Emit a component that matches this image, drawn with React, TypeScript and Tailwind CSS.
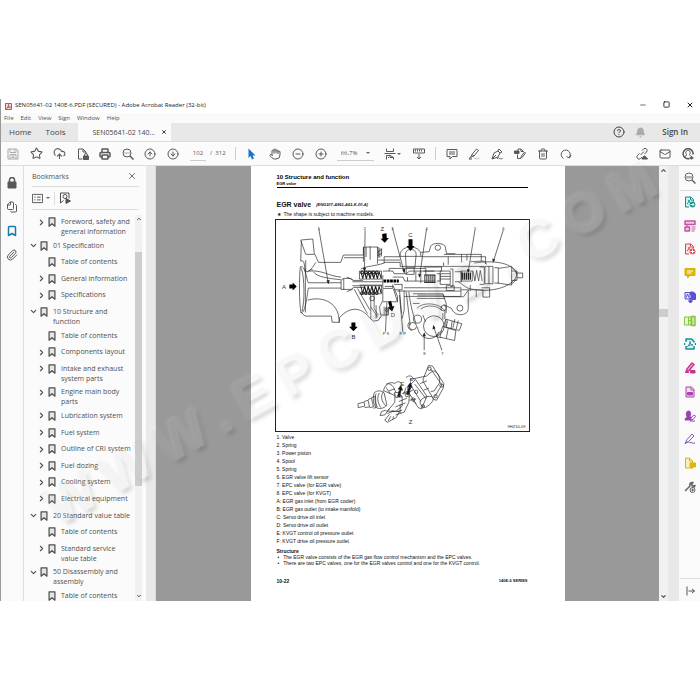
import type { ReactNode } from "react";
import {
  Bell,
  Bookmark,
  ChevronDown,
  ChevronRight,
  ChevronUp,
  CircleArrowDown,
  CircleArrowUp,
  CircleHelp,
  CircleMinus,
  CirclePlus,
  CloudUpload,
  Files,
  Hand,
  Mail,
  Minus,
  Paperclip,
  Printer,
  Square,
  Star,
  Trash2,
  X,
} from "lucide-react";

type BookmarkItem = { title: string; level: 0 | 1; state: "open" | "closed" | "leaf" };

const bookmarks: BookmarkItem[] = [
  { title: "Foreword, safety and\ngeneral information", level: 1, state: "closed" },
  { title: "01 Specification", level: 0, state: "open" },
  { title: "Table of contents", level: 1, state: "leaf" },
  { title: "General information", level: 1, state: "closed" },
  { title: "Specifications", level: 1, state: "closed" },
  { title: "10 Structure and\nfunction", level: 0, state: "open" },
  { title: "Table of contents", level: 1, state: "leaf" },
  { title: "Components layout", level: 1, state: "closed" },
  { title: "Intake and exhaust\nsystem parts", level: 1, state: "closed" },
  { title: "Engine main body\nparts", level: 1, state: "closed" },
  { title: "Lubrication system", level: 1, state: "closed" },
  { title: "Fuel system", level: 1, state: "closed" },
  { title: "Outline of CRI system", level: 1, state: "closed" },
  { title: "Fuel dozing", level: 1, state: "closed" },
  { title: "Cooling system", level: 1, state: "closed" },
  { title: "Electrical equipment", level: 1, state: "closed" },
  { title: "20 Standard value table", level: 0, state: "open" },
  { title: "Table of contents", level: 1, state: "leaf" },
  { title: "Standard service\nvalue table", level: 1, state: "closed" },
  { title: "50 Disassembly and\nassembly", level: 0, state: "open" },
  { title: "Table of contents", level: 1, state: "leaf" },
];

const parts = [
  "1. Valve",
  "2. Spring",
  "3. Power piston",
  "4. Spool",
  "5. Spring",
  "6. EGR valve lift sensor",
  "7. EPC valve (for EGR valve)",
  "8. EPC valve (for KVGT)",
  "A: EGR gas inlet (from EGR cooler)",
  "B: EGR gas outlet (to intake manifold)",
  "C: Servo drive oil inlet",
  "D: Servo drive oil outlet",
  "E: KVGT control oil pressure outlet",
  "F: KVGT drive oil pressure outlet",
];

export default function App() {
  return (
    <div className="flex h-screen flex-col bg-white py-[99px] font-['Open_Sans','Noto_Sans',sans-serif] text-[#505050]">
      <div className="relative flex min-h-0 flex-1 flex-col overflow-hidden border-l border-[#999]">
        <TitleBar />
        <MenuBar />
        <TabBar />
        <Toolbar />
        <div className="flex min-h-0 flex-1">
          <LeftRail />
          <BookmarksPanel />
          <div className="w-[10px] shrink-0 border-r border-[#ddd] bg-[#e9e9e9]" />
          <main className="flex min-w-0 flex-1 justify-center overflow-hidden bg-[#999]">
            <DocumentPage />
          </main>
          <div className="flex w-[9px] shrink-0 flex-col items-center bg-[#f1f1f1] py-px">
            <ChevronUp className="size-[7px]" strokeWidth={4} />
            <div className="mt-[135px] h-2 w-full bg-[#cdcdcd]" />
            <ChevronDown className="mt-auto size-[7px]" strokeWidth={4} />
          </div>
          <div className="w-[11px] shrink-0 bg-[#e8e8e8]" />
          <ToolsRail />
        </div>
        <Watermark />
      </div>
    </div>
  );
}

function TitleBar() {
  return (
    <header className="flex h-[14px] shrink-0 items-center pl-1 pr-[6px] text-[6px] leading-none text-[#222]">
      <svg viewBox="0 0 24 24" className="mr-[3px] size-[7px]" fill="none" stroke="#c33b36" strokeWidth="3">
        <rect x="2" y="2" width="20" height="20" fill="#f4dcda" />
        <path d="M6 18c4-3 6-8 6-13 0 5 2 9 7 10-5-1-9 0-13 3z" />
      </svg>
      <h1 className="-mt-[2px]">SEN05641-02 140E-6.PDF (SECURED) - Adobe Acrobat Reader (32-bit)</h1>
      <div className="-mt-[3px] ml-auto flex items-center gap-4">
        <button aria-label="Minimize" className="flex"><Minus className="size-2" /></button>
        <button aria-label="Maximize" className="flex"><Square className="size-[7px]" strokeWidth={3} /></button>
        <button aria-label="Close" className="flex"><X className="size-2" strokeWidth={3} /></button>
      </div>
    </header>
  );
}

function MenuBar() {
  return (
    <nav className="flex h-[10px] shrink-0 items-center gap-[7px] bg-[#fafafa] pl-[3px] text-[6px] leading-none">
      {["File", "Edit", "View", "Sign", "Window", "Help"].map((m) => (
        <button key={m}>{m}</button>
      ))}
    </nav>
  );
}

function TabBar() {
  return (
    <div className="flex h-[19px] shrink-0 items-center border-b border-[#ddd] bg-[#e8e8e8] text-[8px] leading-none text-[#444]">
      <button className="ml-2">Home</button>
      <button className="ml-[14px]">Tools</button>
      <div className="ml-[13px] flex h-full w-[93px] items-center justify-between bg-[#fbfbfb] pl-[14px] pr-1 text-[7px]">
        <span className="whitespace-nowrap">SEN05641-02 140...</span>
        <button aria-label="Close tab"><X className="size-[6px]" strokeWidth={4} /></button>
      </div>
      <button className="ml-auto" aria-label="Help"><CircleHelp className="size-3" /></button>
      <button className="ml-[10px]" aria-label="Notifications"><Bell className="size-[11px] fill-[#aaa] text-[#aaa]" /></button>
      <button className="ml-4 mr-[12px] font-semibold">Sign In</button>
    </div>
  );
}

function Icon({ children, className = "size-3" }: { children: ReactNode; className?: string }) {
  return (
    <svg viewBox="0 0 24 24" className={className} fill="none" stroke="currentColor" strokeWidth="2" strokeLinejoin="round">
      {children}
    </svg>
  );
}

function ToolButton({ label, children }: { label: string; children: ReactNode }) {
  return (
    <button aria-label={label} className="flex shrink-0 items-center">
      {children}
    </button>
  );
}

function Caret() {
  return <span className="border-x-2 border-t-2 border-x-transparent border-t-[#666]" />;
}

function Toolbar() {
  return (
    <div className="flex h-6 shrink-0 items-center border-b border-[#ddd] bg-[#fbfbfb] px-[6px] text-[#585858]">
      <div className="flex w-[172px] justify-between">
        <ToolButton label="Save">
          <Icon className="size-3 text-[#aaa]">
            <path d="M2 2h17l3 3v17H2zM6 2v7h12V2M14 3v4M6 22v-9h12v9M9 16h6M9 19h6" />
          </Icon>
        </ToolButton>
        <ToolButton label="Star"><Star className="size-[13px]" /></ToolButton>
        <ToolButton label="Upload"><CloudUpload className="size-[13px]" /></ToolButton>
        <ToolButton label="Protect">
          <Icon>
            <path d="M11 22H3V2h9l6 6v3M12 2v6h6" />
            <path d="M13 16h10v7H13z" fill="currentColor" />
            <path d="M15 16v-2a3 3 0 0 1 6 0v2" />
          </Icon>
        </ToolButton>
        <ToolButton label="Print"><Printer className="size-3" strokeWidth={3} /></ToolButton>
        <ToolButton label="Search">
          <Icon>
            <circle cx="10" cy="10" r="8" />
            <path d="m16 16 7 7" strokeWidth="3" />
            <path d="M5 10h2m2 0h2m2 0h2" />
          </Icon>
        </ToolButton>
        <ToolButton label="Previous page"><CircleArrowUp className="size-3" /></ToolButton>
        <ToolButton label="Next page"><CircleArrowDown className="size-3" /></ToolButton>
      </div>
      <input aria-label="Page number" defaultValue="102" className="ml-[11px] w-4 border-b border-[#ccc] text-center text-[6px] leading-[14px]" />
      <span className="ml-1 whitespace-pre text-[6px]">/  312</span>
      <div className="ml-[9px] h-[13px] w-px bg-[#ccc]" />
      <div className="ml-[10px] flex w-[81px] justify-between">
        <ToolButton label="Select">
          <Icon className="size-3 text-[#1473c8]">
            <path d="M5 1v19l4-4 3 7 4-2-3-6h6z" fill="currentColor" stroke="none" />
          </Icon>
        </ToolButton>
        <ToolButton label="Pan"><Hand className="size-3" /></ToolButton>
        <ToolButton label="Zoom out"><CircleMinus className="size-3" /></ToolButton>
        <ToolButton label="Zoom in"><CirclePlus className="size-3" /></ToolButton>
      </div>
      <div className="ml-[10px] flex w-[37px] items-center justify-between border-b border-[#ccc] px-1">
        <select aria-label="Zoom level" className="w-6 appearance-none text-[6px] leading-[14px]">
          <option>66,7%</option>
        </select>
        <Caret />
      </div>
      <button aria-label="Fit page" className="ml-[10px] flex items-center gap-px">
        <Icon>
          <path d="M5 1v6h14V1M1 11h22M5 23v-8h8l6 4v4M12 15v4h7M8 19h2" />
        </Icon>
        <Caret />
      </button>
      <button aria-label="Read mode" className="ml-3">
        <Icon>
          <path d="M1 2h22v8H1zM5 3v4m4-4v4m4-4v4m4-4v4M12 12v10M8 18l4 4 4-4" />
        </Icon>
      </button>
      <div className="ml-[10px] h-[13px] w-px bg-[#ccc]" />
      <div className="ml-[10px] flex w-[126px] justify-between">
        <ToolButton label="Comment">
          <Icon><path d="M2 3h20v14h-9l-5 5v-5H2zM6 8h12M6 12h12" /></Icon>
        </ToolButton>
        <ToolButton label="Highlight">
          <Icon>
            <path d="M8 13 17 2l4 3-9 11zM8 13l-3 6 7-3M5 18l-3 4h6" />
            <path d="M12 21h11" stroke="#ccc" strokeWidth="3" />
          </Icon>
        </ToolButton>
        <ToolButton label="Sign">
          <Icon><path d="m2 22 4-12 8-4 4 4-4 8zM14 6l2-4 6 6-4 2M2 22l8-8M12 22c4-6 4 2 11-1" /></Icon>
        </ToolButton>
        <ToolButton label="Stamp">
          <Icon>
            <path d="M8 6V2h6l5 5M7 13v8h6M14 2v5h5M13 21l2-5 6-8 2 2-6 8z" />
            <path d="M1 6h9v5H1z" fill="currentColor" />
          </Icon>
        </ToolButton>
        <ToolButton label="Delete">
          <Trash2 className="size-3" />
        </ToolButton>
        <ToolButton label="Rotate">
          <Icon><path d="M7 21A9 9 0 1 1 19 18M13 17l6 3 3-6" /></Icon>
        </ToolButton>
      </div>
      <div className="ml-auto flex w-[58px] justify-between">
        <ToolButton label="Share link">
          <Icon>
            <path d="m9 14 7-7M7 11l-4 4a4 4 0 0 0 6 6l3-3M12 5l3-3a4 4 0 0 1 6 6l-4 4" />
            <path d="M12 22c0-4 3-3 4-6 3-1 3 2 4 3 3 0 3 3 3 3z" fill="currentColor" />
          </Icon>
        </ToolButton>
        <ToolButton label="Email"><Mail className="size-3" /></ToolButton>
        <ToolButton label="Account">
          <Icon>
            <path d="M15 21A10 10 0 1 1 22 13" strokeWidth="3" />
            <path d="M5 19c1-5 5-3 4-6-3-4-1-8 3-8s6 4 3 8c0 2 2 2 3 2" />
            <path d="M19 16v7M15 20h8" strokeWidth="3" />
          </Icon>
        </ToolButton>
      </div>
    </div>
  );
}

function LeftRail() {
  return (
    <aside className="flex w-[23px] shrink-0 flex-col items-center gap-3 border-r border-[#ddd] bg-[#fafafa] pt-[11px] text-[#585858]">
      <button aria-label="Security" className="flex">
        <Icon>
          <path d="M4 10h16v12H4z" fill="currentColor" />
          <path d="M7 10V6a5 5 0 0 1 10 0v4" strokeWidth="3" />
        </Icon>
      </button>
      <button aria-label="Pages" className="flex"><Files className="size-3 -scale-x-100" /></button>
      <button aria-label="Bookmarks" className="flex"><Bookmark className="size-3 text-[#1a78ad]" strokeWidth={3} /></button>
      <button aria-label="Attachments" className="flex"><Paperclip className="size-3" /></button>
    </aside>
  );
}

function BookmarksPanel() {
  return (
    <section className="flex w-[122px] shrink-0 flex-col bg-[#fbfbfb]">
      <div className="ml-2 mr-[7px] flex h-[21px] shrink-0 items-center justify-between border-b border-[#ddd] pr-[2px]">
        <h2 className="text-[7px] leading-none">Bookmarks</h2>
        <button aria-label="Close panel"><X className="size-[10px]" /></button>
      </div>
      <div className="ml-2 mr-[7px] flex h-[23px] shrink-0 items-center border-b border-[#ddd]">
        <button aria-label="Options" className="flex items-center gap-[3px]">
          <Icon className="size-[11px]"><path d="M1 3h22v18H1zM5 9h3m3 0h8M5 15h3m3 0h8" /></Icon>
          <Caret />
        </button>
        <div className="mx-[4px] h-[13px] w-px bg-[#ddd]" />
        <button aria-label="Find bookmark">
          <Icon>
            <path d="M9 17l-6 5V2h17v11" />
            <circle cx="12" cy="9" r="4" />
            <path d="M14 13l9 5-9 5z" fill="currentColor" />
          </Icon>
        </button>
      </div>
      <div className="flex min-h-0 flex-1 pt-[5px]">
        <ul className="mt-[2px] flex flex-1 flex-col justify-between pl-[5px] text-[7px] leading-[10px]">
          {bookmarks.map((b, i) => (
            <BookmarkRow key={i} item={b} />
          ))}
        </ul>
        <div className="mr-1 flex w-[7px] shrink-0 flex-col items-center bg-[#f1f1f1] py-px">
          <ChevronUp className="size-[6px]" strokeWidth={4} />
          <div className="mt-[30px] h-[234px] w-full bg-[#cdcdcd]" />
          <ChevronDown className="mb-px mt-auto size-[6px]" strokeWidth={4} />
        </div>
      </div>
    </section>
  );
}

function BookmarkRow({ item }: { item: BookmarkItem }) {
  return (
    <li className={`flex min-h-[13px] items-start last:min-h-[10px] ${item.level === 1 ? "pl-2" : ""}`}>
      <span className="flex h-[10px] w-[10px] items-center">
        {item.state === "open" && <ChevronDown className="size-[9px]" strokeWidth={3} />}
        {item.state === "closed" && <ChevronRight className="size-[9px]" strokeWidth={3} />}
      </span>
      <Icon className="mr-1 h-[10px] w-[10px] shrink-0">
        <path d="M5 2h14v20l-7-6-7 6z" fill="#e6e6e6" strokeWidth="3" />
      </Icon>
      <a href="#page" className="w-0 flex-1 whitespace-pre">{item.title}</a>
    </li>
  );
}

function DocumentPage() {
  return (
    <article id="page" className="flex w-[314px] shrink-0 flex-col bg-white pl-[26px] pr-[37px] pt-2 font-['Liberation_Sans',Arial,sans-serif] text-[5px] leading-[6px] text-[#111]">
      <div className="border-b border-black pb-px font-bold text-black">
        <p className="text-[6px] leading-[7px]">10 Structure and function</p>
        <p className="text-[4px] leading-[5px]">EGR valve</p>
      </div>
      <h2 className="mt-3 flex items-center gap-[5px] text-[7px] font-bold leading-[9px]">
        EGR valve
        <span className="text-[4px] italic">[ENG107-A961-A61-K-00-A]</span>
      </h2>
      <p className="mt-[2px] flex gap-[3px]"><span>★</span>The shape is subject to machine models.</p>
      <div className="-mx-[2px] mt-[2px] border border-[#222]">
        <ValveDiagram />
      </div>
      <ul className="mt-px leading-[8px]">
        {parts.map((p) => (
          <li key={p}>{p}</li>
        ))}
      </ul>
      <h3 className="mt-[3px] font-bold">Structure</h3>
      <ul>
        <li className="flex gap-1 pl-px"><span>•</span>The EGR valve consists of the EGR gas flow control mechanism and the EPC valves.</li>
        <li className="flex gap-1 pl-px"><span>•</span>There are two EPC valves, one for the EGR valves control and one for the KVGT control.</li>
      </ul>
      <footer className="mt-3 flex items-center justify-between font-bold">
        <span>10-22</span>
        <span className="text-[4px]">140E-6 SERIES</span>
      </footer>
    </article>
  );
}

const springXs = [300, 311, 322, 333, 344];

function ValveDiagram() {
  return (
    <svg viewBox="46 165 758 633" className="block w-full font-['Liberation_Sans',Arial,sans-serif]" fill="none" stroke="#222" strokeWidth="2" strokeLinejoin="round">
      {/* housing, inlet side */}
      <path d="M120 225l36-3 5 46h-25M120 225l15 43M122 228l-2 60M163 268l10 24h67l8-22h60v-24h44l2 32M120 288c14-6 10 20 14 32 12 2 10-8 22-6M135 285v35M165 292c-8 14-18 26-24 28" />
      <path d="M119 305c16-6 18 40 24 48h98M119 305c-4 30-4 110 2 138 14 0 18-54 22-74h98M134 312v130M122 310c10 30 10 100 2 128M145 318c40-4 60 16 96 18M158 320c10 16 46 20 82 24" />
      <path d="M120 440l13 13h79l2 18 22 1v-14c30-34 64-34 90 0l12 10 14-2 10-14M141 405c50-14 96 12 94 66M280 372l40 74M290 370l38 66M330 385v75M340 380v50l12 20" />
      <path d="M241 345l8-5h20l8 6h30M241 345v28h30l8-6h30M249 340v34M258 336l18 8M258 380l18-8M275 350h90M275 362h90" />
      <path d="M308 246v44M350 246v50M316 246v30M328 244v40M250 278h58M350 262l14-10M350 272l14-8M357 248v30M362 250v24" />
      {springXs.map((x) => (
        <g key={x} strokeWidth="3">
          <path d={`M${x} 320l6 20 5-20 6 20M${x} 364l6 20 5-20 6 20`} />
          <circle cx={x + 4} cy={322} r="4" />
          <circle cx={x + 4} cy={384} r="4" />
        </g>
      ))}
      <path d="M296 318h66v24h-66zM296 360h66v26h-66M300 312c20-10 40-8 70-18" />

      {/* central body */}
      <path d="M352 285h66M370 292h48v12h130V292M418 270c0-32 62-32 62 0v4h-62zM434 268c0-20 32-20 32 0l-4 40h-26zM436 308v20h24v-20M480 262l25-2 4-16c6-12 36-12 44 0l4 22h26M418 275H370v20M480 275h194v22" />
      <circle cx="531" cy="248" r="8" />
      <path d="M549 268h112v22M562 275v24M602 268v24M618 268v18M550 304h120M366 318h30l4 8h36l10-8h74M366 330v40h30v-12M396 336h30l6 12h90M385 318v-8h110v20M440 336v12M465 320v28M480 318v36M488 306h54v12h-54M400 358h24v16h-24M410 378h190M430 368h170v26H430" />
      <path d="M368 348h46" stroke="#000" strokeWidth="9" strokeDasharray="8 2" />
      <path d="M490 330h34M490 352h34M492 330v22M498 330v22M504 330v22M510 330v22M516 330v22M522 330v22" strokeWidth="3" />
      <path d="M538 318h30v40h-30zM540 326h28M540 334h28M540 342h28M568 312h8v52h-8M528 326h10v22h-10M556 362h24v14h-24zM582 320h20v30h-20" />
      <path d="M604 322v22M610 322v22M616 322v22M622 322v22M628 322v22" stroke="#111" strokeWidth="4" />
      <path d="M600 318h34v30h-34zM636 316l6 32 5-32 6 32 5-32 6 32M672 304h24v52h-24zM700 308h12v46h-12M656 306h14v52h-14M684 304v52" />
      <path d="M712 310l40-6v56l-42-6M752 318h16v28h-16M768 324h17v14h-17M640 294c60-10 120 0 128 34-8 40-90 60-150 40l-26-18M628 290l40-2 10 10M600 374h66v22h20v-28h-24M628 360v18M646 374v22M752 308c10 4 12 12 14 18M752 356c8-4 10-8 13-14" />

      {/* lower body and solenoid */}
      <path d="M366 372v34l-10 20 4 24h22v-20M372 364h26l12 30v16h-44M398 372l12 38M416 375l6 70M430 375v60l-6 25M436 380l12 100M444 380c4 40 14 70 20 92M456 386h90l10 30v28M470 390h80M468 400h84M456 415h20M548 395h60l14-20v55c0 24-42 26-50 0l-24-12" />
      <circle cx="597" cy="429" r="9" />
      <circle cx="334" cy="400" r="7" />
      <circle cx="378" cy="434" r="5" />
      <circle cx="548" cy="429" r="8" />
      <path d="M468 430c20-22 70-16 84 8v24M480 432c16-14 50-12 62 4M546 444v20M330 425l20 30M346 420v40M370 425v25M376 425v25M382 425v25" />
      <circle cx="519" cy="483" r="31" />
      <circle cx="456" cy="483" r="11" />
      <circle cx="470" cy="462" r="12" />
      <path d="M470 485c4 40 50 48 70 12M446 470c-8 8-6 24 8 26M486 450l8 20M555 462l48 14-8 20-40-10zM560 466l-4 22M574 468l-4 24M582 462l-6 26M592 466l-6 26M545 484l40 12-4 30-44-10zM562 490l-6 30M534 500l-8 14 14 4M555 462l-8 24" />

      {/* leader lines */}
      <path d="M174 190l29 166M313 196l-2 122M395 190l35 132M497 192l-21 143M642 195l-20 125M727 195l-30 95M490 555v-48M543 555l-24-68M378 412l-4 88M416 390l10 110" />
      <g fill="#222" stroke="none">
        <path d="M197 346l10-1-4 12zM306 308h10l-5 12zM424 314l9-3-2 14zM472 326l9 2-6 10zM618 312l9 2-6 10zM694 280l9 3-7 10zM485 513h10l-5-12zM515 493l9-4-7-10z" />
      </g>
      <g fill="#000" stroke="none">
        <path d="M86 358h10v-6l12 12-12 12v-6H86zM272 472h12v13h7l-13 13-13-13h7zM443 223h12v20h6l-12 15-12-15h6zM364 207l13-2 1 14h6l-12 14-13-12h6zM382 410l9-2 4 16 6-1-7 16-13-11 5-2z" />
      </g>
      <g fill="#333" stroke="none" fontSize="18">
        <text x="64" y="371">A</text>
        <text x="272" y="521">B</text>
        <text x="442" y="215">C</text>
        <text x="390" y="455">D</text>
        <text x="359" y="197">Z</text>
        <text x="444" y="777">Z</text>
        <text x="418" y="663">E</text>
        <text x="446" y="649">F</text>
      </g>
      <g fill="#222" stroke="none" fontSize="12">
        <text x="171" y="194">1</text>
        <text x="309" y="194">2</text>
        <text x="391" y="194">3</text>
        <text x="494" y="194">4</text>
        <text x="639" y="194">5</text>
        <text x="724" y="194">6</text>
        <text x="487" y="570">8</text>
        <text x="541" y="570">7</text>
        <text x="366" y="510">P S</text>
        <text x="416" y="510">P P</text>
        <text x="740" y="787">9HZ10-09</text>
      </g>

      {/* exterior view */}
      <g transform="translate(0 405)">
        <path d="M503 196l12 2 34 52-2 14-20 36-8-2-32-54v-8zM509 206l34 48-22 36M484 230l12-2 20-16c16 2 22 20 20 36l-16 24-10 2" />
        <circle cx="506" cy="206" r="5" />
        <circle cx="542" cy="256" r="5" />
        <circle cx="524" cy="288" r="5" />
        <path d="M448 238l36-8M440 262l24-24 34 50-16 38-10-4-28-44zM454 262l26 42M462 252l34 44M480 300c-6 8 0 18 14 22 20-12 28-26 20-32-10-4-26 0-34 10zM436 232c8-8 18-6 24 6M478 250l20-8M488 270l16-6M446 276l12-8M446 300l20-4M466 310l-8-8" />
        <circle cx="466" cy="275" r="5" />
        <circle cx="457" cy="298" r="5" />
        <circle cx="486" cy="318" r="5" />
        <path d="M368 272c4-20 20-30 34-22 8-8 14-6 20 0M376 252c10-4 20 2 24 14l10 20M340 278c8-8 22-8 30 0l8 36c-8 12-26 14-34 6-8-12-8-30-4-42zM346 280c-6 12-4 30 4 40M356 278c-8 10-6 30 4 44M368 274c-10 14-6 30 8 44" />
        <path d="M292 310l18-4 2 12-20 4zM310 304l12-4 4 20-14 2M322 298l10-4 6 26-12 2M332 292l12-4 2 34-8 2M370 272l32 14v20l-20 24M400 284l14-4 10 8v30l-20 16-30-2M404 290h20M424 280l14-6 8 6-2 26-14 30-26 8M414 304l24-10M404 320l30-12M418 312v28M374 330l-12 4-4 12 14-2 14-18M386 342l-14 18 8 6 26-14 10-18-24-2M390 348l-8 14M398 348l-2 10M380 340l20-8M384 272l18-6M436 262l-8 20M376 262l12 18M408 334l16-4" />
        <path d="M400 278l14-2 6 12-14 4zM432 280l12-4 4 10-12 4z" fill="#fff" />
        <path d="M410 288l7-22-5 1 8-11 5 14-4-1-5 21zM437 282l8-24-5 1 9-12 5 15-4-1-7 23z" fill="#111" />
      </g>
    </svg>
  );
}

const pageOutline = "M10 22H3V2h11l5 5v4M13 2v6h6";

function ToolsRail() {
  return (
    <aside className="flex w-[21px] shrink-0 flex-col items-center bg-[#fafafa] pt-[6px]">
      <div className="flex h-[321px] flex-col justify-between">
        <button aria-label="Find text" className="relative after:absolute after:-left-1 after:top-[18px] after:h-px after:w-5 after:bg-[#ddd]">
          <Icon className="size-3 text-[#666]">
            <circle cx="10" cy="10" r="8" />
            <path d="m16 16 7 7" strokeWidth="3" />
            <path d="M6 8v5m4-5v5m4-5v5" />
          </Icon>
        </button>
        <button aria-label="Export PDF">
          <Icon className="size-3 text-[#12908a]">
            <path d={pageOutline} fill="#d4eeec" />
            <path d="M6 16c4-3 4-6 4-8 0 4 2 6 5 6" />
            <circle cx="17" cy="17" r="5" fill="currentColor" />
            <path d="M13 17h7m-3-3 3 3-3 3" stroke="#fff" />
          </Icon>
        </button>
        <button aria-label="Edit PDF">
          <Icon className="size-3 text-[#c554a4]">
            <path d="M2 2h20v7H2zM2 14h9v8H2z" fill="#f0c8e4" strokeWidth="3" />
            <path d="M15 14h8M15 18h8M15 22h6M6 9v5" />
          </Icon>
        </button>
        <button aria-label="Create PDF">
          <Icon className="size-3 text-[#d64a55]">
            <path d={pageOutline} fill="#fbe0e1" />
            <path d="M6 16c4-3 4-6 4-8 0 4 2 6 5 6" />
            <circle cx="17" cy="17" r="5" fill="currentColor" />
            <path d="M13 17h8m-4-4v8" stroke="#fff" />
          </Icon>
        </button>
        <button aria-label="Comment">
          <Icon className="size-3 text-[#dcb50b]">
            <path d="M2 3h20v14H12l-5 5v-5H2z" fill="currentColor" />
            <path d="M6 8h12M6 12h9" stroke="#fff" />
          </Icon>
        </button>
        <button aria-label="Combine files">
          <Icon className="size-3 text-[#5751cc]">
            <path d="M13 2h6l4 4v11h-8V8h-2z" fill="currentColor" />
            <path d="M2 3h10v13H2zM4 13l3-7 3 7" fill="#e4e3fa" />
            <path d="M13 14v9m-4-4 4 4 4-4" strokeWidth="3" />
          </Icon>
        </button>
        <button aria-label="Organize pages">
          <Icon className="size-3 text-[#86c443]">
            <path d="M1 4h8v16H1zM9 4h5v7H9zM9 11h5v9H9z" fill="#e5f4d4" />
            <path d="M15 3h7v18h-7z" fill="#c9e8a8" strokeWidth="3" />
          </Icon>
        </button>
        <button aria-label="Compress PDF">
          <Icon className="size-3 text-[#168e9c]">
            <path d="M4 8V2h11l5 5v2M4 16v6h16v-6M1 10v4M23 10v4" fill="#d9eff1" strokeWidth="3" />
            <path d="M7 17c4-4 5-7 5-10 0 4 2 7 6 7-4-1-8 0-11 3z" />
          </Icon>
        </button>
        <button aria-label="Redact">
          <Icon className="size-3 text-[#c93290]">
            <path d="M6 14 16 2l4 3-10 12-6 3z" fill="#eec0dc" strokeWidth="3" />
            <path d="M2 21h8M13 17h9v5h-9z" fill="currentColor" />
          </Icon>
        </button>
        <button aria-label="Prepare form">
          <Icon className="size-3 text-[#ac42ae]">
            <path d="M4 2h11l5 5v15H4zM14 2v6h6" fill="#f2dcf2" />
            <path d="M7 13h10v5H7z" fill="currentColor" />
          </Icon>
        </button>
        <button aria-label="Request signatures">
          <Icon className="size-3 text-[#9b3eb1]">
            <path d="M2 20c0-6 5-3 4-7-3-5-1-11 3-11s6 5 3 10c0 3 2 2 3 3v5z" fill="currentColor" />
            <path d="m13 20 2-6 6-4 2 3-5 6zM12 22h10" fill="#fff" />
          </Icon>
        </button>
        <button aria-label="Fill and sign">
          <Icon className="size-3 text-[#8454bd]">
            <path d="M2 21 6 13 16 2l4 4L9 17zM2 21c8-5 8-3 10-1 3-3 4 2 10 0" />
          </Icon>
        </button>
        <button aria-label="Send for comments">
          <Icon className="size-3 text-[#dcb50b]">
            <path d="M3 2h8l6 6v14H3zM11 2v6h6" fill="#f9efba" />
            <path d="M12 12h11v8h-5l-3 3v-3h-3z" fill="currentColor" />
          </Icon>
        </button>
        <button aria-label="More tools">
          <Icon className="size-3 text-[#666]">
            <path d="M2 20 12 10c-2-5 2-8 6-7l-3 4 2 3 5-1c-1 4-4 5-7 4" strokeWidth="3" />
            <circle cx="17" cy="18" r="5" fill="#fff" />
            <path d="M17 15v6M14 18h6" />
          </Icon>
        </button>
      </div>
      <div className="mb-1 mt-auto flex w-5 justify-center border-t border-[#ddd] pt-[6px]">
        <button aria-label="Collapse tools">
          <Icon className="size-3 text-[#555]"><path d="M6 3v18M9 12h12M16 8l5 4-5 4" /></Icon>
        </button>
      </div>
    </aside>
  );
}

function Watermark() {
  return (
    <div aria-hidden="true" className="pointer-events-none absolute inset-0 flex items-center justify-center pb-4">
      {/* keeps only the part of each shadow that falls outside the letters */}
      <svg className="absolute size-0">
        <filter id="emboss" x="-5%" y="-20%" width="110%" height="140%">
          <feGaussianBlur in="SourceAlpha" stdDeviation="2" result="soft" />
          <feOffset in="soft" dx="1" dy="4" result="low" />
          <feFlood floodColor="#000" floodOpacity="0.17" />
          <feComposite in2="low" operator="in" />
          <feComposite in2="SourceAlpha" operator="out" result="shade" />
          <feOffset in="soft" dx="-1" dy="-2" result="high" />
          <feFlood floodColor="#fff" floodOpacity="0.14" />
          <feComposite in2="high" operator="in" />
          <feComposite in2="SourceAlpha" operator="out" result="light" />
          <feFlood floodColor="#c4c4c4" floodOpacity="0.12" />
          <feComposite in2="SourceAlpha" operator="in" result="face" />
          <feMerge>
            <feMergeNode in="shade" />
            <feMergeNode in="light" />
            <feMergeNode in="face" />
          </feMerge>
        </filter>
      </svg>
      <div className="flex -rotate-[29deg] gap-3 font-['Liberation_Sans',Arial,sans-serif] text-[54px] font-bold leading-none [filter:url(#emboss)]">
        {"WWW.EPCDVD.COM".split("").map((c, i) => (
          <span key={i}>{c}</span>
        ))}
      </div>
    </div>
  );
}
